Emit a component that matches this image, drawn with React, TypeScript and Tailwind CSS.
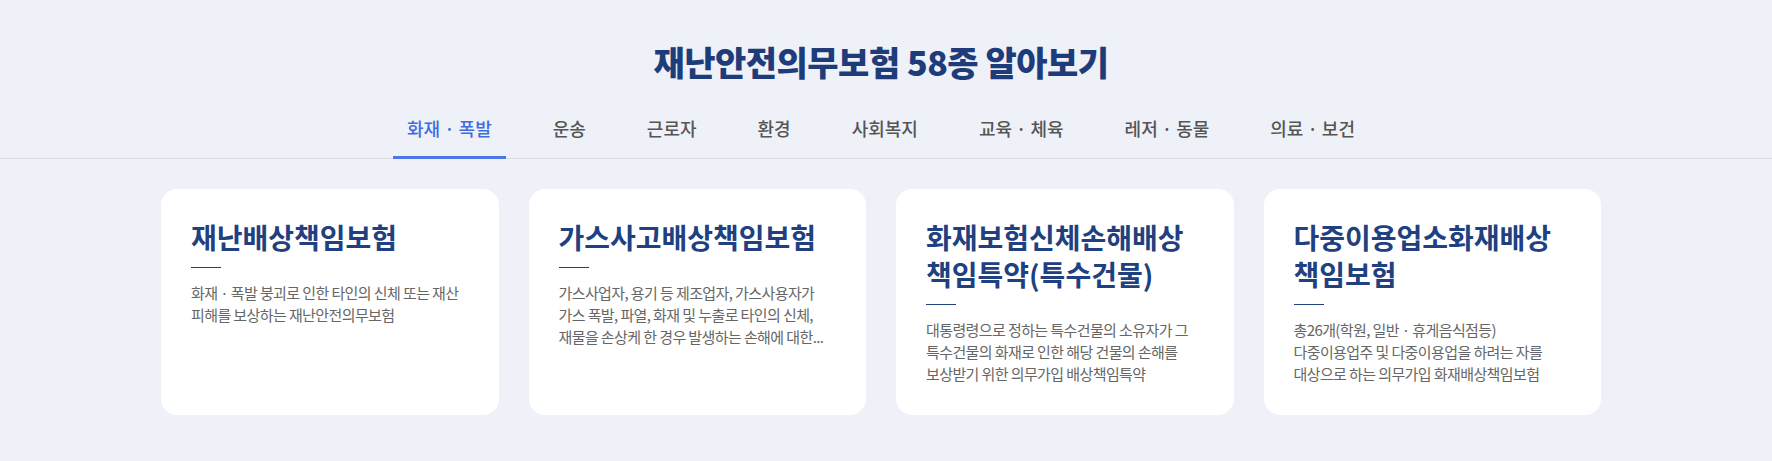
import React from "react";

const tabs = ["화재 · 폭발", "운송", "근로자", "환경", "사회복지", "교육 · 체육", "레저 · 동물", "의료 · 보건"];

const cards: { title: string[]; desc: string[] }[] = [
  {
    title: ["재난배상책임보험"],
    desc: ["화재 · 폭발 붕괴로 인한 타인의 신체 또는 재산", "피해를 보상하는 재난안전의무보험"],
  },
  {
    title: ["가스사고배상책임보험"],
    desc: [
      "가스사업자, 용기 등 제조업자, 가스사용자가",
      "가스 폭발, 파열, 화재 및 누출로 타인의 신체,",
      "재물을 손상케 한 경우 발생하는 손해에 대한...",
    ],
  },
  {
    title: ["화재보험신체손해배상", "책임특약(특수건물)"],
    desc: [
      "대통령령으로 정하는 특수건물의 소유자가 그",
      "특수건물의 화재로 인한 해당 건물의 손해를",
      "보상받기 위한 의무가입 배상책임특약",
    ],
  },
  {
    title: ["다중이용업소화재배상", "책임보험"],
    desc: [
      "총26개(학원, 일반 · 휴게음식점등)",
      "다중이용업주 및 다중이용업을 하려는 자를",
      "대상으로 하는 의무가입 화재배상책임보험",
    ],
  },
];

export default function App() {
  return (
    <div
      className="min-h-screen w-full bg-[#eef1f8] pb-[46px]"
      style={{ fontFamily: '"Noto Sans CJK KR", "Noto Sans", sans-serif' }}
    >
      <div className="pt-[41px] pr-[10px] flex justify-center">
        <h1 className="text-[34px] leading-[42px] font-extrabold tracking-[-0.5px] text-[#1f3c7a]">
          재난안전의무보험 58종 알아보기
        </h1>
      </div>

      <div className="mt-[33px] border-b border-[#d9dce3]">
        <div className="pr-[10px] flex justify-center gap-[33px]">
          {tabs.map((t, i) => (
            <div
              key={t}
              className={
                "relative px-[14px] pb-[18px] text-[18px] leading-[24px] font-medium whitespace-nowrap " +
                (i === 0 ? "text-[#3d6de0]" : "text-[#555555]")
              }
            >
              {t}
              {i === 0 && <span className="absolute left-0 right-0 bottom-[-1px] h-[3px] bg-[#4a77e5]" />}
            </div>
          ))}
        </div>
      </div>

      <div className="pr-[10px] flex justify-center mt-[30px]">
        <div className="w-[1440px] grid grid-cols-4 gap-[30px]">
          {cards.map((c, i) => (
            <div key={i} className="bg-white rounded-[16px] h-[226px] px-[30px] pt-[30px]">
              <div className="text-[28px] leading-[37px] font-bold text-[#21407f]">
                {c.title.map((l, j) => (
                  <div key={j} className="whitespace-nowrap">
                    {l}
                  </div>
                ))}
              </div>
              <div className="mt-[11px] w-[30px] h-[1px] bg-[#21407f]" />
              <div className="mt-[14px] text-[15px] leading-[22px] tracking-[-0.6px] text-[#666666]">
                {c.desc.map((l, j) => (
                  <div key={j} className="whitespace-nowrap">
                    {l}
                  </div>
                ))}
              </div>
            </div>
          ))}
        </div>
      </div>
    </div>
  );
}
